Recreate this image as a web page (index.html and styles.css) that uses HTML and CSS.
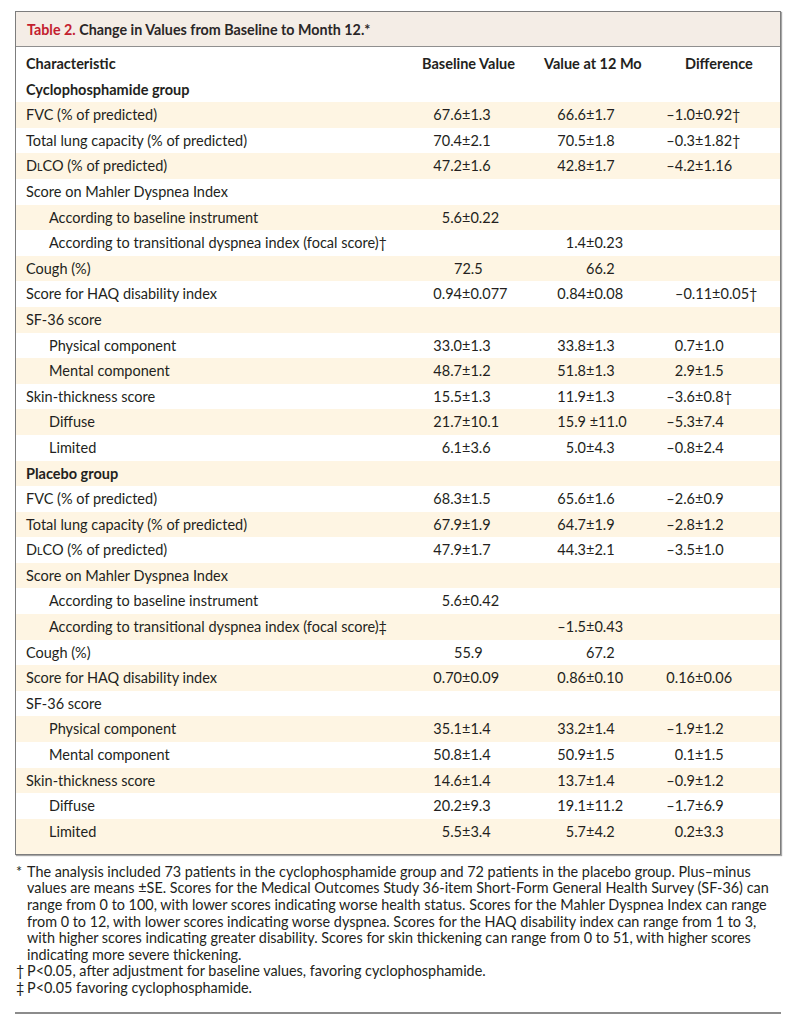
FILE: index.html
```html
<!DOCTYPE html>
<html>
<head>
<meta charset="utf-8">
<link rel="stylesheet" href="styles.css">
</head>
<body>
<div class="page">
  <div class="box">
    <div class="title"><span class="tnum">Table 2.</span> Change in Values from Baseline to Month 12.*</div>
    <div class="tbody">
      <div class="row head">
        <div class="lab">Characteristic</div>
        <div>Baseline Value</div>
        <div>Value at 12 Mo</div>
        <div>Difference</div>
      </div>
      <div class="rows">
        <div class="row grp"><div class="lab">Cyclophosphamide group</div><div></div><div></div><div></div></div>
        <div class="row"><div class="lab">FVC (% of predicted)</div><div class="v"><span class="a">67.6</span>±1.3</div><div class="v"><span class="a">66.6</span>±1.7</div><div class="v"><span class="a">–1.0</span>±0.92†</div></div>
        <div class="row"><div class="lab">Total lung capacity (% of predicted)</div><div class="v"><span class="a">70.4</span>±2.1</div><div class="v"><span class="a">70.5</span>±1.8</div><div class="v"><span class="a">–0.3</span>±1.82†</div></div>
        <div class="row"><div class="lab">D<span class="sc">L</span>CO (% of predicted)</div><div class="v"><span class="a">47.2</span>±1.6</div><div class="v"><span class="a">42.8</span>±1.7</div><div class="v"><span class="a">–4.2</span>±1.16</div></div>
        <div class="row"><div class="lab">Score on Mahler Dyspnea Index</div><div></div><div></div><div></div></div>
        <div class="row"><div class="lab ind">According to baseline instrument</div><div class="v"><span class="a">5.6</span>±0.22</div><div></div><div></div></div>
        <div class="row"><div class="lab ind">According to transitional dyspnea index (focal score)†</div><div></div><div class="v"><span class="a">1.4</span>±0.23</div><div></div></div>
        <div class="row"><div class="lab">Cough (%)</div><div class="v ctr">72.5</div><div class="v ctr">66.2</div><div></div></div>
        <div class="row"><div class="lab">Score for HAQ disability index</div><div class="v"><span class="a">0.94</span>±0.077</div><div class="v"><span class="a">0.84</span>±0.08</div><div class="v ctr">–0.11±0.05†</div></div>
        <div class="row"><div class="lab">SF-36 score</div><div></div><div></div><div></div></div>
        <div class="row"><div class="lab ind">Physical component</div><div class="v"><span class="a">33.0</span>±1.3</div><div class="v"><span class="a">33.8</span>±1.3</div><div class="v"><span class="a">0.7</span>±1.0</div></div>
        <div class="row"><div class="lab ind">Mental component</div><div class="v"><span class="a">48.7</span>±1.2</div><div class="v"><span class="a">51.8</span>±1.3</div><div class="v"><span class="a">2.9</span>±1.5</div></div>
        <div class="row"><div class="lab">Skin-thickness score</div><div class="v"><span class="a">15.5</span>±1.3</div><div class="v"><span class="a">11.9</span>±1.3</div><div class="v"><span class="a">–3.6</span>±0.8†</div></div>
        <div class="row"><div class="lab ind">Diffuse</div><div class="v"><span class="a">21.7</span>±10.1</div><div class="v"><span class="a">15.9</span> ±11.0</div><div class="v"><span class="a">–5.3</span>±7.4</div></div>
        <div class="row"><div class="lab ind">Limited</div><div class="v"><span class="a">6.1</span>±3.6</div><div class="v"><span class="a">5.0</span>±4.3</div><div class="v"><span class="a">–0.8</span>±2.4</div></div>
        <div class="row grp"><div class="lab">Placebo group</div><div></div><div></div><div></div></div>
        <div class="row"><div class="lab">FVC (% of predicted)</div><div class="v"><span class="a">68.3</span>±1.5</div><div class="v"><span class="a">65.6</span>±1.6</div><div class="v"><span class="a">–2.6</span>±0.9</div></div>
        <div class="row"><div class="lab">Total lung capacity (% of predicted)</div><div class="v"><span class="a">67.9</span>±1.9</div><div class="v"><span class="a">64.7</span>±1.9</div><div class="v"><span class="a">–2.8</span>±1.2</div></div>
        <div class="row"><div class="lab">D<span class="sc">L</span>CO (% of predicted)</div><div class="v"><span class="a">47.9</span>±1.7</div><div class="v"><span class="a">44.3</span>±2.1</div><div class="v"><span class="a">–3.5</span>±1.0</div></div>
        <div class="row"><div class="lab">Score on Mahler Dyspnea Index</div><div></div><div></div><div></div></div>
        <div class="row"><div class="lab ind">According to baseline instrument</div><div class="v"><span class="a">5.6</span>±0.42</div><div></div><div></div></div>
        <div class="row"><div class="lab ind">According to transitional dyspnea index (focal score)‡</div><div></div><div class="v"><span class="a">–1.5</span>±0.43</div><div></div></div>
        <div class="row"><div class="lab">Cough (%)</div><div class="v ctr">55.9</div><div class="v ctr">67.2</div><div></div></div>
        <div class="row"><div class="lab">Score for HAQ disability index</div><div class="v"><span class="a">0.70</span>±0.09</div><div class="v"><span class="a">0.86</span>±0.10</div><div class="v"><span class="a">0.16</span>±0.06</div></div>
        <div class="row"><div class="lab">SF-36 score</div><div></div><div></div><div></div></div>
        <div class="row"><div class="lab ind">Physical component</div><div class="v"><span class="a">35.1</span>±1.4</div><div class="v"><span class="a">33.2</span>±1.4</div><div class="v"><span class="a">–1.9</span>±1.2</div></div>
        <div class="row"><div class="lab ind">Mental component</div><div class="v"><span class="a">50.8</span>±1.4</div><div class="v"><span class="a">50.9</span>±1.5</div><div class="v"><span class="a">0.1</span>±1.5</div></div>
        <div class="row"><div class="lab">Skin-thickness score</div><div class="v"><span class="a">14.6</span>±1.4</div><div class="v"><span class="a">13.7</span>±1.4</div><div class="v"><span class="a">–0.9</span>±1.2</div></div>
        <div class="row"><div class="lab ind">Diffuse</div><div class="v"><span class="a">20.2</span>±9.3</div><div class="v"><span class="a">19.1</span>±11.2</div><div class="v"><span class="a">–1.7</span>±6.9</div></div>
        <div class="row"><div class="lab ind">Limited</div><div class="v"><span class="a">5.5</span>±3.4</div><div class="v"><span class="a">5.7</span>±4.2</div><div class="v"><span class="a">0.2</span>±3.3</div></div>
      </div>
    </div>
  </div>
  <div class="notes">
    <div class="note"><span class="mk">*</span><span class="nt">The analysis included 73 patients in the cyclophosphamide group and 72 patients in the placebo group. Plus–minus<br>values are means ±SE. Scores for the Medical Outcomes Study 36-item Short-Form General Health Survey (SF-36) can<br>range from 0 to 100, with lower scores indicating worse health status. Scores for the Mahler Dyspnea Index can range<br>from 0 to 12, with lower scores indicating worse dyspnea. Scores for the HAQ disability index can range from 1 to 3,<br>with higher scores indicating greater disability. Scores for skin thickening can range from 0 to 51, with higher scores<br>indicating more severe thickening.</span></div>
    <div class="note"><span class="mk">†</span><span class="nt">P&lt;0.05, after adjustment for baseline values, favoring cyclophosphamide.</span></div>
    <div class="note"><span class="mk">‡</span><span class="nt">P&lt;0.05 favoring cyclophosphamide.</span></div>
  </div>
  <div class="rule"></div>
</div>
</body>
</html>
```

FILE: styles.css
```css
html, body {
  margin: 0;
  padding: 0;
  background: #ffffff;
}

body {
  font-family: Lato, "Open Sans", sans-serif;
  color: #231f20;
  font-size: 14.5px;
}

.page {
  padding: 11px 15px 0;
}

.box {
  border: 1px solid #7d7d7d;
  box-shadow: 1px 1px 1px rgba(0, 0, 0, 0.35);
}

.title {
  background: #f4ede6;
  border-bottom: 1px solid #8f8f8f;
  height: 34px;
  line-height: 35px;
  padding-left: 11px;
  font-weight: 700;
  font-size: 14.3px;
  color: #2a2627;
}

.tnum {
  color: #c3202e;
}

.tbody {
  padding-top: 4px;
}

.row {
  display: grid;
  grid-template-columns: 390px 133px 122px 1fr;
  height: 25.6px;
  line-height: 26px;
  white-space: nowrap;
}

.rows .row:nth-child(even) {
  background: #fef5e3;
}

.rows .row:last-child {
  height: 35px;
}

.lab {
  padding-left: 10px;
}

.lab.ind {
  padding-left: 33px;
}

.head,
.grp {
  font-weight: 700;
}

.head > div:nth-child(2) {
  padding-left: 16px;
}

.head > div:nth-child(3) {
  padding-left: 5px;
}

.head > div:nth-child(4) {
  padding-left: 24px;
}

.v .a {
  display: inline-block;
  text-align: right;
}

.row > .v:nth-child(2) .a {
  width: 56px;
}

.row > .v:nth-child(3) .a {
  width: 47px;
}

.row > .v:nth-child(4) .a {
  width: 34px;
}

.row > .ctr:nth-child(2) {
  padding-left: 48px;
}

.row > .ctr:nth-child(3) {
  padding-left: 47px;
}

.row > .ctr:nth-child(4) {
  padding-left: 14px;
}

.sc {
  font-size: 10.5px;
}

.notes {
  margin-top: 9px;
  font-size: 14.4px;
  line-height: 16.6px;
  color: #231f20;
}

.note {
  display: flex;
  white-space: nowrap;
}

.mk {
  flex: none;
  width: 11px;
  padding-left: 1px;
}

.rule {
  margin-top: 15px;
  height: 2px;
  background: #8c8c8c;
}
```
